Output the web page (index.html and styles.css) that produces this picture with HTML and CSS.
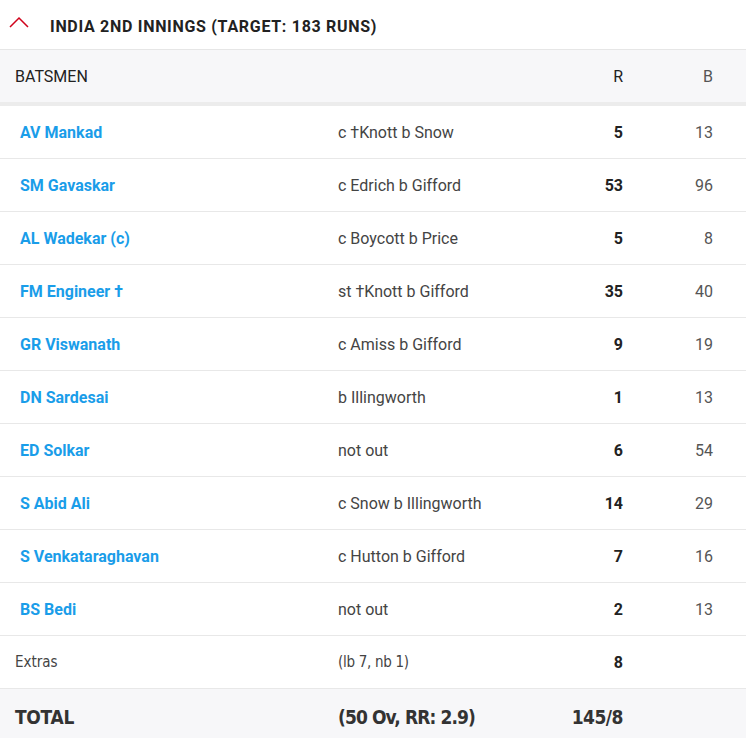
FILE: index.html
```html
<!DOCTYPE html>
<html>
<head>
<meta charset="utf-8">
<link rel="stylesheet" href="styles.css">
</head>
<body>
<div class="card">
  <div class="title">
    <svg class="chev" width="20" height="12" viewBox="0 0 20 12"><path d="M1 11 L10 2 L19 11" fill="none" stroke="#d0021b" stroke-width="1.5"/></svg>
    <span>INDIA 2ND INNINGS (TARGET: 183 RUNS)</span>
  </div>
  <div class="row head">
    <div class="c-name">BATSMEN</div>
    <div class="c-dis"></div>
    <div class="c-r">R</div>
    <div class="c-b">B</div>
  </div>
  <div class="row"><div class="c-name name">AV Mankad</div><div class="c-dis">c †Knott b Snow</div><div class="c-r runs">5</div><div class="c-b">13</div></div>
  <div class="row"><div class="c-name name">SM Gavaskar</div><div class="c-dis">c Edrich b Gifford</div><div class="c-r runs">53</div><div class="c-b">96</div></div>
  <div class="row"><div class="c-name name">AL Wadekar (c)</div><div class="c-dis">c Boycott b Price</div><div class="c-r runs">5</div><div class="c-b">8</div></div>
  <div class="row"><div class="c-name name">FM Engineer †</div><div class="c-dis">st †Knott b Gifford</div><div class="c-r runs">35</div><div class="c-b">40</div></div>
  <div class="row"><div class="c-name name">GR Viswanath</div><div class="c-dis">c Amiss b Gifford</div><div class="c-r runs">9</div><div class="c-b">19</div></div>
  <div class="row"><div class="c-name name">DN Sardesai</div><div class="c-dis">b Illingworth</div><div class="c-r runs">1</div><div class="c-b">13</div></div>
  <div class="row"><div class="c-name name">ED Solkar</div><div class="c-dis">not out</div><div class="c-r runs">6</div><div class="c-b">54</div></div>
  <div class="row"><div class="c-name name">S Abid Ali</div><div class="c-dis">c Snow b Illingworth</div><div class="c-r runs">14</div><div class="c-b">29</div></div>
  <div class="row"><div class="c-name name">S Venkataraghavan</div><div class="c-dis">c Hutton b Gifford</div><div class="c-r runs">7</div><div class="c-b">16</div></div>
  <div class="row"><div class="c-name name">BS Bedi</div><div class="c-dis">not out</div><div class="c-r runs">2</div><div class="c-b">13</div></div>
  <div class="row extras"><div class="c-name">Extras</div><div class="c-dis">(lb 7, nb 1)</div><div class="c-r runs">8</div><div class="c-b"></div></div>
  <div class="row total"><div class="c-name">TOTAL</div><div class="c-dis">(50 Ov, RR: 2.9)</div><div class="c-r">145/8</div><div class="c-b"></div></div>
</div>
</body>
</html>
```
FILE: styles.css
```css
html, body { margin: 0; padding: 0; background: #fff; }
body { font-family: Roboto, "Open Sans", sans-serif; color: #333; width: 746px; }
.card { width: 746px; }
.title {
  height: 49px;
  border-bottom: 1px solid #e6e6e6;
  display: flex;
  align-items: center;
  position: relative;
}
.chev { position: absolute; left: 9px; top: 16px; }
.title span {
  margin-left: 50px;
  font-weight: 700;
  font-size: 16px;
  letter-spacing: 0.7px;
  color: #222;
  padding-top: 4px;
}
.row {
  display: grid;
  grid-template-columns: 338px 1fr 60px 90px 33px;
  align-items: center;
  height: 52px;
  border-bottom: 1px solid #e8e8e8;
  font-size: 16px;
}
.head {
  height: 52px;
  background: #f7f7f9;
  border-bottom: 4px solid #ececec;
  color: #222;
}
.head .c-name { padding-left: 15px; }
.c-name { padding-left: 20px; }
.name { color: #1a9de9; font-weight: 700; }
.c-dis { color: #444; }
.c-r { text-align: right; }
.c-b { text-align: right; color: #555; }
.runs { font-weight: 700; color: #222; }
.extras, .total { font-family: "DejaVu Sans Condensed", "DejaVu Sans", sans-serif; }
.extras { font-size: 15px; }
.extras .c-name { padding-left: 15px; color: #444; }
.extras .c-dis { color: #444; letter-spacing: -0.3px; }
.extras .runs { font-family: Roboto, sans-serif; font-size: 16px; }
.total {
  height: 56px;
  background: #f7f7f9;
  border-bottom: none;
  font-weight: 700;
  font-size: 19px;
  color: #333;
}
.total .c-name { padding-left: 15px; letter-spacing: -0.3px; }
.total .c-dis { color: #333; letter-spacing: -0.9px; }
.total .c-r { letter-spacing: -0.5px; }
```
